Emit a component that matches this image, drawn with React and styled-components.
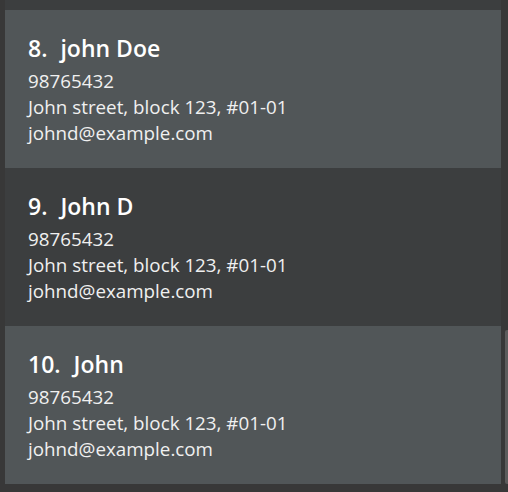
import React from 'react'
import styled, { createGlobalStyle } from 'styled-components'

const persons = [
    { id: 8, name: 'john Doe' },
    { id: 9, name: 'John D' },
    { id: 10, name: 'John' },
].map(p => ({
    ...p,
    phone: '98765432',
    address: 'John street, block 123, #01-01',
    email: 'johnd@example.com',
}))

function PersonCard({ person }) {
    return (
        <Card odd={person.id % 2 === 0}>
            <TitleRow>
                <Id>{person.id}. </Id>
                <Name>{person.name}</Name>
            </TitleRow>
            <Detail>{person.phone}</Detail>
            <Detail>{person.address}</Detail>
            <Detail>{person.email}</Detail>
        </Card>
    )
}

export default function App() {
    return (
        <>
            <GlobalStyle />
            <ListView>
                <PrevCardEdge />
                {persons.map(p => (
                    <PersonCard key={p.id} person={p} />
                ))}
                <ScrollThumb />
            </ListView>
        </>
    )
}

const GlobalStyle = createGlobalStyle`
    html, body {
        margin: 0;
        padding: 0;
        background: #383838;
    }
    * {
        box-sizing: border-box;
    }
`

const ListView = styled.div`
    position: relative;
    height: 492px;
    overflow: hidden;
    background: #383838;
    padding: 0 7px 0 5px;
    display: flex;
    flex-direction: column;
`

const PrevCardEdge = styled.div`
    flex-shrink: 0;
    height: 10px;
    background: #3c3e3f;
`

const ScrollThumb = styled.div`
    position: absolute;
    right: 0;
    top: 330px;
    width: 3px;
    height: 154px;
    background: #5c5c5c;
    border-radius: 2px 0 0 2px;
`

const Card = styled.div`
    flex-shrink: 0;
    height: 158px;
    padding: 0 0 0 23px;
    display: flex;
    flex-direction: column;
    justify-content: center;
    background: ${p => (p.odd ? '#515658' : '#3c3e3f')};
    color: #ffffff;
    font-family: "Segoe UI", "Open Sans", sans-serif;
`

const TitleRow = styled.div`
    display: flex;
    align-items: baseline;
    gap: 7px;
    font-size: 23px;
    line-height: 32px;
    font-weight: 600;
    margin-bottom: 4px;
`

const Id = styled.span`
    white-space: pre;
`

const Name = styled.span``

const Detail = styled.div`
    font-size: 18.8px;
    line-height: 26px;
    color: #f0f0f0;
`
